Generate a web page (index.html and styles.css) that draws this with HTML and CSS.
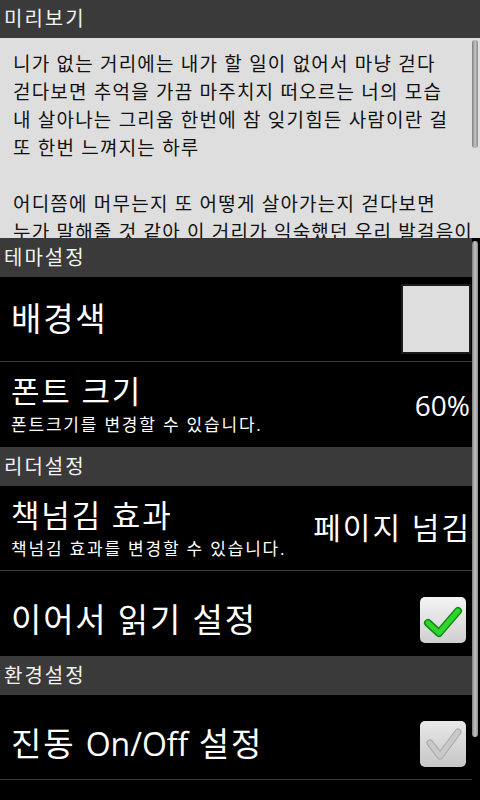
FILE: index.html
```html
<!DOCTYPE html>
<html lang="ko">
<head>
<meta charset="utf-8">
<title>설정</title>
<link rel="stylesheet" href="styles.css">
</head>
<body>
<div class="screen">
  <div class="cat cat-top">미리보기</div>
  <div class="preview">
    <div class="lyrics">
      <div class="line">니가 없는 거리에는 내가 할 일이 없어서 마냥 걷다</div>
      <div class="line">걷다보면 추억을 가끔 마주치지 떠오르는 너의 모습</div>
      <div class="line">내 살아나는 그리움 한번에 참 잊기힘든 사람이란 걸</div>
      <div class="line">또 한번 느껴지는 하루</div>
      <div class="line">&nbsp;</div>
      <div class="line">어디쯤에 머무는지 또 어떻게 살아가는지 걷다보면</div>
      <div class="line">누가 말해줄 것 같아 이 거리가 익숙했던 우리 발걸음이</div>
    </div>
    <div class="thumb thumb-preview"></div>
  </div>
  <div class="list">
    <div class="cat">테마설정</div>
    <div class="pref sep">
      <div class="pref-text"><div class="title big">배경색</div></div>
      <div class="swatch"></div>
    </div>
    <div class="pref">
      <div class="pref-text">
        <div class="title">폰트 크기</div>
        <div class="summary">폰트크기를 변경할 수 있습니다.</div>
      </div>
      <div class="value value-pct">60%</div>
    </div>
    <div class="cat">리더설정</div>
    <div class="pref sep">
      <div class="pref-text">
        <div class="title">책넘김 효과</div>
        <div class="summary">책넘김 효과를 변경할 수 있습니다.</div>
      </div>
      <div class="value">페이지 넘김</div>
    </div>
    <div class="pref low">
      <div class="pref-text"><div class="title big">이어서 읽기 설정</div></div>
      <div class="check on">
        <svg width="46" height="46" viewBox="0 0 46 46">
          <polyline points="8,26 19,36 38,14" fill="none" stroke="#0e8a0e" stroke-width="8" stroke-linecap="round" stroke-linejoin="round"/>
          <polyline points="8,26 19,36 38,14" fill="none" stroke="#2fd42f" stroke-width="5" stroke-linecap="round" stroke-linejoin="round"/>
        </svg>
      </div>
    </div>
    <div class="cat">환경설정</div>
    <div class="pref sep low">
      <div class="pref-text"><div class="title big">진동 <span class="latin">On/Off</span> 설정</div></div>
      <div class="check off">
        <svg width="46" height="46" viewBox="0 0 46 46">
          <polyline points="10,22 20,35 38,11" fill="none" stroke="#a9a9a9" stroke-width="7" stroke-linecap="round" stroke-linejoin="round"/>
          <polyline points="10,22 20,35 38,11" fill="none" stroke="#c9c9c9" stroke-width="5" stroke-linecap="round" stroke-linejoin="round"/>
        </svg>
      </div>
    </div>
    <div class="thumb thumb-list"></div>
  </div>
</div>
</body>
</html>
```
FILE: styles.css
```css
html, body {
  margin: 0;
  padding: 0;
  background: #000;
}
.screen {
  width: 480px;
  height: 800px;
  overflow: hidden;
  background: #000;
  color: #fff;
  font-family: "Open Sans", "Noto Sans CJK KR", sans-serif;
}
.cat {
  height: 39px;
  box-sizing: border-box;
  background: #3a3a3a;
  color: #f2f2f2;
  font-size: 20px;
  letter-spacing: 2px;
  line-height: 39px;
  padding-left: 4px;
  margin-right: 8px;
}
.cat-top {
  height: 38px;
  line-height: 38px;
  margin-right: 0;
}
.preview {
  position: relative;
  height: 200px;
  overflow: hidden;
  background: #dedede;
  color: #111;
}
.lyrics {
  padding: 12px 0 0 13px;
  font-size: 19px;
  letter-spacing: 1.2px;
  line-height: 28px;
}
.line {
  white-space: nowrap;
}
.thumb {
  position: absolute;
  right: 2px;
  width: 6px;
  border-radius: 3px;
  background: linear-gradient(to right, #7a7a7a, #c4c4c4 50%, #8a8a8a);
}
.thumb-preview {
  top: 2px;
  height: 108px;
}
.list {
  position: relative;
  height: 562px;
}
.thumb-list {
  top: 3px;
  height: 496px;
}
.pref {
  height: 85px;
  box-sizing: border-box;
  display: flex;
  align-items: center;
  justify-content: space-between;
  padding: 0 14px 0 11px;
  margin-right: 8px;
}
.pref.low {
  padding-top: 13px;
}
.pref.sep {
  border-bottom: 1px solid #3a3a3a;
}
.pref-text {
  display: flex;
  flex-direction: column;
}
.title {
  font-size: 31px;
  letter-spacing: 1.8px;
  line-height: 36px;
  white-space: nowrap;
}
.title.big {
  font-size: 33px;
  letter-spacing: 1.8px;
  line-height: 40px;
}
.latin {
  letter-spacing: 0;
  font-size: 32px;
}
.summary {
  font-size: 17px;
  letter-spacing: 1.8px;
  line-height: 22px;
  margin-top: 5px;
  white-space: nowrap;
}
.value {
  font-size: 30px;
  letter-spacing: 2px;
  line-height: 36px;
  white-space: nowrap;
  margin-right: -13px;
}
.value-pct {
  font-size: 28px;
  letter-spacing: 0;
  margin-right: -12px;
}
.swatch {
  width: 66px;
  height: 66px;
  background: #dedede;
  border: 2px solid #1c1c1c;
  margin-right: -13px;
}
.check {
  width: 46px;
  height: 46px;
  border-radius: 5px;
  margin-right: -8px;
}
.check svg {
  display: block;
}
.check.on {
  background: linear-gradient(to bottom, #f4f4f4, #cfcfcf);
}
.check.off {
  background: linear-gradient(to bottom, #e8e8e8, #c6c6c6);
}
```
